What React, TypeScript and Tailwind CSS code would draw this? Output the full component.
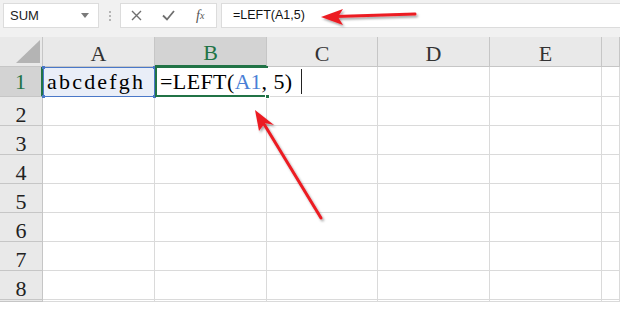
import React from "react"

const cols = ["A", "B", "C", "D", "E", ""]
const rows = [1, 2, 3, 4, 5, 6, 7, 8, 9]

function Arrows() {
    return (
        <svg className="absolute inset-0 pointer-events-none" width={620} height={309} viewBox="0 0 620 309">
            <defs>
                <filter id="sh" x="-20%" y="-20%" width="140%" height="140%">
                    <feDropShadow dx="1.5" dy="2" stdDeviation="1.2" floodColor="#000" floodOpacity="0.35" />
                </filter>
            </defs>
            <g filter="url(#sh)" fill="#ec1c24" stroke="#ec1c24" strokeLinecap="round">
                {/* top arrow, pointing at formula bar */}
                <line x1={415} y1={14} x2={336} y2={16.5} strokeWidth={3} />
                <polygon points="321,17 343,9 338,17 343,25" stroke="none" />
                {/* lower arrow, pointing at B1 */}
                <line x1={321} y1={218} x2={264} y2={124} strokeWidth={3} />
                <polygon points="255,110 274,125 265,123 259,131" stroke="none" />
            </g>
        </svg>
    )
}

function Toolbar() {
    return (
        <div className="flex h-[37px] items-start bg-[#f1f1f1] pt-[3px] pl-[3px] font-['Liberation_Sans',sans-serif]">
            <div className="flex h-[25px] w-[96px] items-center justify-between border border-[#dcdcdc] bg-white pl-[6px] pr-[9px] text-[13px] text-[#222]">
                <span>SUM</span>
                <svg width="8" height="5" viewBox="0 0 8 5"><path d="M0 0h8L4 5z" fill="#7a7a7a" /></svg>
            </div>
            <div className="flex h-[25px] w-[21px] flex-col items-center justify-center gap-[2px]">
                <span className="h-[2px] w-[2px] bg-[#b5b5b5]" />
                <span className="h-[2px] w-[2px] bg-[#b5b5b5]" />
                <span className="h-[2px] w-[2px] bg-[#b5b5b5]" />
            </div>
            <div className="flex h-[25px] w-[97px] items-center border border-[#dcdcdc] bg-white">
                <div className="flex w-[32px] justify-center">
                    <svg width="11" height="11" viewBox="0 0 11 11"><path d="M1 1l9 9M10 1l-9 9" stroke="#6f6f6f" strokeWidth="1.4" /></svg>
                </div>
                <div className="flex w-[32px] justify-center">
                    <svg width="13" height="11" viewBox="0 0 13 11"><path d="M1 5.5l4 4L12 1" stroke="#6f6f6f" strokeWidth="1.8" fill="none" /></svg>
                </div>
                <div className="flex w-[32px] justify-center font-['Liberation_Serif',serif] text-[14px] italic text-[#555]">
                    f<span className="text-[10px] leading-none mt-[6px]">x</span>
                </div>
            </div>
            <div className="ml-[4px] flex h-[25px] flex-1 items-center border border-[#dcdcdc] border-r-0 bg-white pl-[11px] text-[12.5px] text-[#111]">
                =LEFT(A1,5)
            </div>
        </div>
    )
}

export default function App() {
    return (
        <div className="relative h-[309px] w-[620px] overflow-hidden bg-white">
            <Toolbar />
            <div className="grid grid-cols-[43px_112px_112px_111px_112px_112px_1fr] grid-rows-[30px_30px_29px_29px_29px_29px_29px_29px_29px_1fr] font-['Liberation_Serif',serif] text-[22px] text-black">
                {/* corner */}
                <div className="flex items-end justify-end border-r border-b border-[#c6c6c6] bg-[#e9e9e9] pr-[2px] pb-[3px]">
                    <svg width="24" height="23" viewBox="0 0 24 23"><path d="M24 0v23H0z" fill="#b4b4b4" /></svg>
                </div>
                {cols.map((c) => (
                    <div
                        key={c || "f"}
                        className={
                            c === "B"
                                ? "flex items-center justify-center border-r border-b-2 border-r-[#c6c6c6] border-b-[#217346] bg-[#d3d3d3] pt-[3px] text-[#217346]"
                                : "flex items-center justify-center border-r border-b border-[#c6c6c6] bg-[#e9e9e9] pt-[3px] text-[#333]"
                        }
                    >
                        {c}
                    </div>
                ))}
                {rows.map((r) => (
                    <React.Fragment key={r}>
                        <div
                            className={
                                r === 1
                                    ? "flex items-center justify-center border-r-2 border-b border-r-[#217346] border-b-[#c6c6c6] bg-[#d3d3d3] text-[#217346]"
                                    : "flex items-start justify-center border-r border-b border-[#c6c6c6] bg-[#e9e9e9] pt-[1px] text-[#222]"
                            }
                        >
                            {r < 9 ? r : null}
                        </div>
                        {cols.map((c) => {
                            if (r === 1 && c === "A") {
                                return (
                                    <div key={c} className="relative flex items-center border-r border-b border-[#dadada] bg-[#e9eef8] pl-[4px] tracking-[2.2px]">
                                        <div className="absolute inset-[0px_-1px_-1px_0px] border border-[#4a78c8]" />
                                        <span className="absolute left-[-1px] top-[-1px] h-[3px] w-[3px] bg-[#4a78c8]" />
                                        <span className="absolute right-[-2px] top-[-1px] h-[3px] w-[3px] bg-[#4a78c8]" />
                                        <span className="absolute left-[-1px] bottom-[-2px] h-[3px] w-[3px] bg-[#4a78c8]" />
                                        <span className="absolute right-[-2px] bottom-[-2px] h-[3px] w-[3px] bg-[#4a78c8]" />
                                        <span className="relative">abcdefgh</span>
                                    </div>
                                )
                            }
                            if (r === 1 && c === "B") {
                                return (
                                    <div key={c} className="relative z-10 flex items-center whitespace-nowrap border-b border-[#dadada] pl-[5px] tracking-[0.4px]">
                                        <div className="absolute inset-[-1px_-1px_-1px_0px] border-2 border-r-0 border-[#217346]" />
                                        <span className="absolute right-[-3px] bottom-[-3px] h-[5px] w-[5px] border border-white bg-[#217346]" />
                                        <span className="relative shrink-0">
                                            =LEFT(<span className="text-[#4a7fd6] tracking-normal">A1</span>, 5)
                                        </span>
                                        <span className="relative ml-[8px] h-[25px] w-[1px] shrink-0 bg-[#222]" />
                                    </div>
                                )
                            }
                            return <div key={c || "f"} className="border-r border-b border-[#dadada]" />
                        })}
                    </React.Fragment>
                ))}
            </div>
            <Arrows />
        </div>
    )
}
